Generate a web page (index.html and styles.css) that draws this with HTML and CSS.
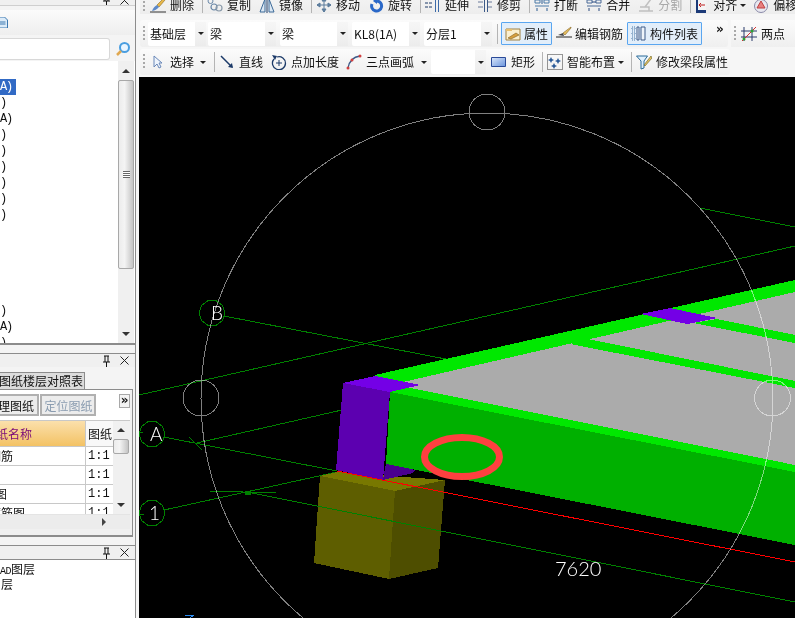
FILE: index.html
```html
<!DOCTYPE html>
<html lang="zh">
<head>
<meta charset="utf-8">
<title>梁</title>
<link rel="stylesheet" href="styles.css">
</head>
<body>
<div class="app">
<aside class="side">
  <div class="phead phead-top">
    <svg class="pin" viewBox="0 0 9 12"><path d="M2 1h5M3 1v6M6 1v6M1 7h7M4.500 7v5" fill="none" stroke="#111"/></svg>
    <svg class="close" viewBox="0 0 9 9"><path d="M.5.5l8 8M8.500.5l-8 8" stroke="#222" fill="none"/></svg>
  </div>
  <div class="ptools">
    <svg class="doc" viewBox="0 0 8 11"><path d="M0 0h5l3 3v8H0z" fill="#dcebf8" stroke="#3c78b0"/><path d="M0 5h6M0 7h6" stroke="#3c78b0"/></svg>
  </div>
  <div class="search">
    <div class="searchbox"></div>
    <svg class="lens" viewBox="0 0 16 16"><circle cx="9.500" cy="6.500" r="4.500" fill="#eaf5ff" stroke="#4a9ee0" stroke-width="2"/><path d="M6 10l-4 4" stroke="#e0a850" stroke-width="2.500"/></svg>
  </div>
  <div class="listwrap">
    <div class="list">
      <div class="row"></div>
      <div class="row sel">A)</div>
      <div class="row">)</div>
      <div class="row">A)</div>
      <div class="row">)</div>
      <div class="row">)</div>
      <div class="row">)</div>
      <div class="row">)</div>
      <div class="row">)</div>
      <div class="row">)</div>
      <div class="row"></div>
      <div class="row"></div>
      <div class="row"></div>
      <div class="row"></div>
      <div class="row"></div>
      <div class="row">)</div>
      <div class="row">A)</div>
      <div class="row">)</div>
    </div>
    <div class="vbar">
      <div class="arrow-up"></div>
      <div class="thumb"><span class="grip"></span></div>
      <div class="arrow-down"></div>
    </div>
  </div>

  <div class="phead phead-mid">
    <svg class="pin" viewBox="0 0 9 12"><path d="M2 1h5M3 1v6M6 1v6M1 7h7M4.500 7v5" fill="none" stroke="#111"/></svg>
    <svg class="close" viewBox="0 0 9 9"><path d="M.5.5l8 8M8.500.5l-8 8" stroke="#222" fill="none"/></svg>
  </div>
  <div class="tabstrip"><div class="tab">图纸楼层对照表</div></div>
  <div class="dwg">
    <div class="subtabs">
      <div class="subtab subtab-a"><span class="cut">理图纸</span></div>
      <div class="subtab subtab-b">定位图纸</div>
      <div class="more">»</div>
    </div>
    <div class="tablewrap">
      <div class="table">
        <div class="th th-name"><span class="cut-e">纸名称</span></div><div class="th th-ratio">图纸</div>
        <div class="td"><span class="cut-a">钢筋</span></div><div class="td ratio">1:1</div>
        <div class="td"></div><div class="td ratio">1:1</div>
        <div class="td"><span class="cut-b">图</span></div><div class="td ratio">1:1</div>
        <div class="td"><span class="cut-c">箍筋图</span></div><div class="td ratio">1:1</div>
      </div>
      <div class="vbar vbar-sm">
        <div class="arrow-up"></div>
        <div class="thumb thumb-sm"></div>
        <div class="arrow-down"></div>
      </div>
    </div>
    <div class="hbar"><span class="arrow-right"></span></div>
  </div>

  <div class="phead phead-low">
    <svg class="pin" viewBox="0 0 9 12"><path d="M2 1h5M3 1v6M6 1v6M1 7h7M4.500 7v5" fill="none" stroke="#111"/></svg>
    <svg class="close" viewBox="0 0 9 9"><path d="M.5.5l8 8M8.500.5l-8 8" stroke="#222" fill="none"/></svg>
  </div>
  <div class="layers">
    <div class="layer"><span class="lat">AD</span>图层</div>
    <div class="layer"><span class="cut-d">图层</span></div>
  </div>
</aside>

<main class="main">
  <div class="bar bar1">
    <span class="gripper"></span>
    <div class="tool"><svg class="ic" viewBox="0 0 16 16"><path d="M14 1L7 8l2 2 6-7z" fill="#e8b84a" stroke="#8a6a20" stroke-width=".6"/><path d="M7 8c-2 1-4 3-5 6 3-.5 5-1.500 7-4z" fill="#5c88c8"/><path d="M0 15h16" stroke="#333"/></svg>删除</div>
    <span class="sep"></span>
    <div class="tool"><svg class="ic" viewBox="0 0 16 16"><circle cx="3.500" cy="4" r="2.500" fill="none" stroke="#6a88a8"/><circle cx="7" cy="10" r="3" fill="none" stroke="#6a88a8" stroke-width="1.200"/><circle cx="12" cy="11" r="3" fill="none" stroke="#8a9aaa" stroke-width="1.200"/></svg>复制</div>
    <div class="tool"><svg class="ic" viewBox="0 0 16 16"><path d="M6 2L1 15h5zM10 2l5 13h-5z" fill="#dce8f4" stroke="#3c6a98"/><path d="M8 0v16" stroke="#1c3a68"/></svg>镜像</div>
    <span class="sep"></span>
    <div class="tool"><svg class="ic" viewBox="0 0 16 16"><path d="M8 1v14M1 8h14M8 1L6 4h4zM8 15l-2-3h4zM1 8l3-2v4zM15 8l-3-2v4z" fill="#6888a8" stroke="#5a7a9a"/></svg>移动</div>
    <div class="tool"><svg class="ic" viewBox="0 0 16 16"><path d="M9 4a5 5 0 1 1-5 3" fill="none" stroke="#2a68c8" stroke-width="3"/><path d="M9 0v7L5 4z" fill="#2a68c8"/></svg>旋转</div>
    <span class="sep"></span>
    <div class="tool"><svg class="ic" viewBox="0 0 16 16"><path d="M0 6h8M0 10h8" stroke="#1c3a68" stroke-dasharray="3 1"/><path d="M10.500 1v14M13.500 1v14" stroke="#3c6aa8"/></svg>延伸</div>
    <div class="tool"><svg class="ic" viewBox="0 0 16 16"><path d="M1 5h5M1 10h5M10 5h5M10 10h5" stroke="#6a7a9a"/><path d="M7.500 1v14M10.500 1v14" stroke="#3c5a88"/></svg>修剪</div>
    <span class="sep"></span>
    <div class="tool"><svg class="ic" viewBox="0 0 16 16"><path d="M1 3h5v3H1zM10 3h5v3h-5zM1 9h14" fill="none" stroke="#4a7aa8"/><path d="M8 1v6M3 11v3M13 11v3" stroke="#2a5a90"/></svg>打断</div>
    <div class="tool"><svg class="ic" viewBox="0 0 16 16"><path d="M1 3h5v3H1zM10 3h5v3h-5zM1 9h14" fill="none" stroke="#4a6a98"/><path d="M6 5h4M3 11v3M13 11v3" stroke="#2a4a80"/></svg>合并</div>
    <div class="tool off"><svg class="ic" viewBox="0 0 16 16"><path d="M1 14h14M2 10h9v4M13 2l-6 8" fill="none" stroke="#c0c0c0" stroke-width="1.500"/></svg>分割</div>
    <span class="sep"></span>
    <div class="tool tool-align"><svg class="ic ic-narrow" viewBox="0 0 12 16"><path d="M1 0h10v16H1z" fill="#1c3a78"/><path d="M3 3h8v10H3z" fill="#f4f4f4"/><path d="M4 8h6M4 8l2-2M4 8l2 2" stroke="#c02020"/></svg>对齐<span class="caret"></span></div>
    <div class="tool"><svg class="ic" viewBox="0 0 16 16"><circle cx="8" cy="9" r="6.500" fill="#e8e8f0" stroke="#8a8aa8"/><path d="M8 4l4 7H4z" fill="#e88080" stroke="#c04040"/></svg>偏移</div>
  </div>

  <div class="barset">
    <div class="bar bar2">
      <span class="gripper"></span>
      <div class="combo combo-a">基础层<span class="drop"></span></div>
      <div class="combo">梁<span class="drop"></span></div>
      <div class="combo">梁<span class="drop"></span></div>
      <div class="combo">KL8(1A)<span class="drop"></span></div>
      <div class="combo">分层1<span class="drop"></span></div>
      <span class="sep sep-b"></span>
      <div class="tool btn btn-a"><svg class="ic" viewBox="0 0 16 16"><path d="M1 3h14v11H1z" fill="#fbf0d0" stroke="#a08040"/><path d="M1 3h6v2H1z" fill="#e8c070"/><path d="M3 12l8-5 3 2-8 4z" fill="#d8a040" stroke="#806020" stroke-width=".6"/></svg>属性</div>
      <div class="tool tool-edit"><svg class="ic" viewBox="0 0 16 16"><path d="M15 1l-8 6 2 2 6-7z" fill="#e8c060" stroke="#806020" stroke-width=".6"/><path d="M0 11h16" stroke="#222"/><path d="M2 9l5-2 1 3z" fill="#444"/></svg>编辑钢筋</div>
      <div class="tool btn btn-b"><svg class="ic" viewBox="0 0 16 16"><path d="M1 1h3v3H1zM1 6h3v3H1zM1 11h3v3H1z" fill="#dce8f4" stroke="#4a7aa8" stroke-dasharray="1 1"/><path d="M6 1h2v13H6zM10 1h4v13h-4z" fill="#eef4fa" stroke="#3c5a88"/></svg>构件列表</div>
      <div class="more more-bar">»</div>
    </div>
    <div class="bar bar2b">
      <span class="gripper"></span>
      <div class="tool"><svg class="ic" viewBox="0 0 16 16"><path d="M3 1v14M11 1v14M0 5h16M0 11h16" stroke="#2a3a6a"/><path d="M1 15L15 1" stroke="#d03030"/><circle cx="11" cy="5" r="1.500" fill="#30a030"/><circle cx="3" cy="13" r="1.500" fill="#30a030"/></svg>两点</div>
    </div>
  </div>

  <div class="bar bar3">
    <span class="gripper"></span>
    <div class="tool tool-sel"><svg class="ic ic-ptr" viewBox="0 0 10 14"><path d="M1 1v11l3-3 2 4 2-1-2-4h3z" fill="#eef4fc" stroke="#6a88b8"/></svg>选择<span class="caret"></span></div>
    <span class="sep"></span>
    <div class="tool"><svg class="ic" viewBox="0 0 16 16"><path d="M2 2l11 11" stroke="#1c3a68" stroke-width="1.500"/><path d="M14 14l-5-1 4-4z" fill="#1c3a68"/></svg>直线</div>
    <div class="tool tool-tight"><svg class="ic" viewBox="0 0 16 16"><path d="M3 5a6.500 6.500 0 1 0 3-2" fill="none" stroke="#1c3a68" stroke-width="1.300"/><path d="M8 6v6M5 9h6" stroke="#1c3a68"/><path d="M1 1l5 1-2 4z" fill="#1c3a68"/></svg>点加长度</div>
    <div class="tool"><svg class="ic" viewBox="0 0 16 16"><path d="M2 14C3 8 7 3 14 2" fill="none" stroke="#3c5a88" stroke-width="1.300"/><circle cx="2" cy="14" r="1.500" fill="#d04040"/><circle cx="6" cy="6" r="1.500" fill="#d04040"/><circle cx="14" cy="2" r="1.500" fill="#d04040"/></svg>三点画弧<span class="caret caret-far"></span></div>
    <div class="combo combo-c"><span class="drop"></span></div>
    <div class="tool tool-tight"><svg class="ic" viewBox="0 0 16 16"><defs><linearGradient id="rg" x1="0" y1="0" x2="1" y2="1"><stop offset="0" stop-color="#dce8fa"/><stop offset="1" stop-color="#6a94dc"/></linearGradient></defs><path d="M.5 3.500h14v9H.5z" fill="url(#rg)" stroke="#2a4a98"/></svg>矩形</div>
    <span class="sep"></span>
    <div class="tool tool-smart"><svg class="ic" viewBox="0 0 16 16"><path d="M.5.500h15v15H.5z" fill="none" stroke="#333" stroke-dasharray="1 1"/><path d="M4 3l1 2 2 1-2 1-1 2-1-2-2-1 2-1zM11 4l1 2 2 1-2 1-1 2-1-2-2-1 2-1zM7 9l1 2 2 1-2 1-1 2-1-2-2-1 2-1z" fill="#2a5a98"/></svg>智能布置<span class="caret"></span></div>
    <span class="sep"></span>
    <div class="tool"><svg class="ic" viewBox="0 0 16 16"><path d="M.5 2h11L8 7v7l-3 1V7z" fill="#e0f0fc" stroke="#2a6a98"/><path d="M15 2L8 11l1 1 7-8z" fill="#e8c060" stroke="#606020" stroke-width=".6"/></svg>修改梁段属性</div>
  </div>

  <div class="canvas">
    <svg class="scene" viewBox="139 77 656 541" width="656" height="541">
      <defs>
        <polygon id="axis" points="13,0 10.500,7.600 4,12.400 -4,12.400 -10.500,7.600 -13,0 -10.500,-7.600 -4,-12.400 4,-12.400 10.500,-7.600"/>
      </defs>
      <g class="gl">
        <path d="M139 395L795 246"/>
        <path d="M700 208L795 227"/>
        <path d="M224 316L456 361"/>
        <path d="M197 443L342 410"/>
        <path d="M164 437L337 471"/>
        <path d="M164 510L337 472"/>
        <path d="M139 515L144 514"/>
        <path d="M139 432L143 433"/>
        <path d="M189 437L202 450"/>
        <path d="M209 491L276 493"/>
        <use href="#axis" x="212" y="313"/>
        <use href="#axis" x="152" y="434"/>
        <use href="#axis" x="152" y="513"/>
      </g>
      <g class="solid">
        <path class="c-base-top" d="M320 476L337 472L445 480L395 491Z"/>
        <path class="c-base-front" d="M320 476L395 491L389 579L314 563Z"/>
        <path class="c-base-side" d="M395 491L445 480L438 568L389 579Z"/>
        <path class="c-col-side" d="M386 463L415 470L413 473L383 480Z"/>
        <path class="c-beam" d="M390 392L795 472V545L386 464Z"/>
        <path class="c-bright" d="M375 375L795 280V472L390 392Z"/>
        <path class="c-slab" d="M403 382L795 292V465L410 388Z"/>
        <path class="c-bright" d="M570 344L588 339L795 381V388Z"/>
        <path class="c-bright" d="M693 323L717 319L795 335V343Z"/>
        <path class="c-col-top" d="M641 314L670 308L717 318L687 324Z"/>
        <path class="c-col-top" d="M343 383L375 376L420 385L390 392Z"/>
        <path class="c-col-front" d="M343 383L390 392L383 480L336 470Z"/>
      </g>
      <g class="gl">
        <path d="M247 492L795 602"/>
        <path class="blob" d="M245 491h5v3h-5z"/>
      </g>
      <path class="red" d="M337 471L795 562"/>
      <ellipse class="mark" cx="462" cy="457" rx="37.500" ry="19.500"/>
      <g class="guide">
        <circle cx="487" cy="399" r="286"/>
        <circle cx="487" cy="112" r="18"/>
        <circle cx="201" cy="398" r="18"/>
        <circle cx="772.500" cy="398" r="18"/>
      </g>
      <path class="blue" d="M185 615H194L190 618"/>
      <text class="lbl" x="211" y="320">B</text>
      <text class="lbl" x="150" y="441">A</text>
      <text class="lbl" x="149" y="520">1</text>
      <text class="dim" x="555" y="576">7620</text>
    </svg>
  </div>
</main>
</div>
</body>
</html>
```
FILE: styles.css
```css
* { box-sizing: border-box; }
html, body { margin: 0; padding: 0; width: 795px; height: 618px; overflow: hidden; background: #f6f6f6; }
body { font-family: "Noto Sans CJK SC", "Liberation Sans", sans-serif; font-size: 12px; color: #111; }
svg { display: block; flex: none; }

.app { display: flex; width: 795px; height: 618px; }
.side { width: 136px; height: 618px; flex: none; display: flex; flex-direction: column; overflow: hidden; margin-right: 3px; background: #f4f4f4; border-right: 1px solid #8c8c8c; }
.main { flex: 1; min-width: 0; display: flex; flex-direction: column; height: 618px; overflow: hidden; }

/* side panels */
.phead { display: flex; align-items: flex-end; justify-content: flex-end; gap: 9px; padding-right: 6px; flex: none; overflow: hidden; background: #f0f0f0; }
.phead-top { height: 6px; border-bottom: 1px solid #cfcfcf; align-items: flex-end; }
.phead-top .pin { margin-bottom: -1px; }
.phead-top .close { margin-bottom: 0; }
.phead-mid { height: 14px; margin-top: 8px; border-top: 1px solid #8c8c8c; align-items: center; }
.phead-low { height: 15px; margin-top: 8px; border-top: 1px solid #8c8c8c; border-bottom: 1px solid #8c8c8c; align-items: center; }
.pin { width: 9px; height: 12px; }
.close { width: 9px; height: 9px; }
.ptools { height: 25px; margin-top: 4px; padding-top: 7px; background: linear-gradient(#fbfbfb, #eeeeee); flex: none; margin-left: -1px; }
.doc { width: 9px; height: 11px; }
.search { height: 25px; display: flex; align-items: center; flex: none; margin-top: 1px; }
.searchbox { width: 110px; height: 22px; background: #fff; border: 1px solid #d8d8d8; border-left: 0; border-radius: 0 3px 3px 0; }
.lens { width: 16px; height: 16px; margin-left: 5px; }
.listwrap { height: 284px; flex: none; display: flex; background: #fff; border-bottom: 2px solid #8c8c8c; overflow: hidden; }
.list { width: 118px; padding-top: 2px; font-family: "Liberation Mono", monospace; letter-spacing: -1.2px; }
.row { height: 16px; line-height: 17px; color: #111; }
.row.sel { width: 16px; background: #316ac5; color: #fff; }
.vbar { width: 16px; display: flex; flex-direction: column; align-items: stretch; background: #f0f0f0; position: relative; }
.arrow-up, .arrow-down { height: 19px; flex: none; display: flex; align-items: center; justify-content: center; }
.arrow-up::before { content: ""; border: 4px solid transparent; border-bottom: 4px solid #333; border-top: 0; }
.arrow-down::before { content: ""; border: 4px solid transparent; border-top: 4px solid #333; border-bottom: 0; }
.thumb { height: 189px; flex: none; background: linear-gradient(90deg, #ececec, #f4f4f4 40%, #c4c4c4); border: 1px solid #a8a8a8; border-radius: 2px; display: flex; align-items: center; justify-content: center; margin-bottom: auto; }
.grip { width: 7px; height: 7px; border-top: 1px solid #666; border-bottom: 1px solid #666; background: linear-gradient(#fff 0 1px, #666 1px 2px, #fff 2px 3px, #666 3px 4px, #fff 4px); }

.tabstrip { height: 22px; flex: none; display: flex; align-items: flex-end; background: #f4f4f4; }
.tab { width: 85px; height: 17px; line-height: 16px; background: #dcdcdc; border: 1px solid #8c8c8c; border-left: 0; border-bottom: 0; font-size: 12px; padding-left: 0; white-space: nowrap; overflow: hidden; text-indent: -1px; }
.dwg { height: 148px; flex: none; display: flex; flex-direction: column; border-top: 1px solid #8c8c8c; border-bottom: 2px solid #8c8c8c; border-right: 1px solid #8c8c8c; margin-right: 2px; background: #f0f0f0; padding-right: 2px; }
.subtabs { height: 30px; flex: none; display: flex; background: #fff; padding-top: 4px; }
.subtab { height: 22px; line-height: 20px; background: #ececec; border: 2px solid #b0b0b0; border-left: 0; white-space: nowrap; overflow: hidden; }
.subtab-a { width: 39px; margin-right: 1px; }
.subtab-b { width: 57px; color: #8a9cb0; border-left: 2px solid #b0b0b0; padding-left: 3px; }
.cut { margin-left: -2px; }
.more { font-family: "DejaVu Sans", sans-serif; font-size: 12px; font-weight: 700; line-height: 11px; }
.subtabs .more { width: 11px; height: 14px; margin-left: 23px; background: #f4f4f4; border: 1px solid #a8a8a8; text-align: center; }
.tablewrap { height: 94px; flex: none; display: flex; background: #f0f0f0; border-top: 1px solid #c8c8c8; }
.table { width: 113px; display: grid; grid-template-columns: 85px 28px; grid-auto-rows: 19px; grid-template-rows: 26px; background: #fff; overflow: hidden; }
.th { line-height: 25px; white-space: nowrap; overflow: hidden; border-bottom: 1px solid #c8c8c8; }
.th-name { background: linear-gradient(#fbe0ac, #f3c264); color: #7a0a78; }
.th-ratio { background: #f8f8f8; border-left: 1px solid #c8c8c8; padding-left: 2px; }
.td { border-bottom: 1px solid #c8c8c8; line-height: 18px; white-space: nowrap; overflow: hidden; }
.ratio { border-left: 1px solid #c8c8c8; padding-left: 2px; font-family: "Liberation Mono", monospace; }
.cut-a { margin-left: -11px; display: inline-block; }
.cut-b { margin-left: -5px; display: inline-block; }
.cut-c { margin-left: -11px; display: inline-block; }
.cut-e { margin-left: -4px; display: inline-block; }
.vbar-sm { width: 16px; }
.vbar-sm .arrow-up, .vbar-sm .arrow-down { height: 18px; }
.thumb-sm { height: 15px; }
.hbar { height: 15px; flex: none; background: #ececec; display: flex; align-items: center; padding-left: 102px; border-top: 1px solid #e4e4e4; }
.arrow-right { border: 4px solid transparent; border-left: 4px solid #444; border-right: 0; }
.layers { flex: 1; background: #fff; padding-top: 1px; overflow: hidden; }
.layer { height: 15px; line-height: 15px; white-space: nowrap; }
.lat { font-family: "Liberation Mono", monospace; font-size: 10px; letter-spacing: -.5px; }
.cut-d { margin-left: -11px; display: inline-block; }

/* toolbars */
.bar { display: flex; align-items: center; flex: none; white-space: nowrap; background: linear-gradient(#fbfbfb, #efefef); }
.bar1 { height: 14px; align-items: flex-end; overflow: hidden; margin-left: 1px; padding-bottom: 1px; background: linear-gradient(#f2f2f2, #ededed); }
.barset { display: flex; margin-top: 6px; height: 27px; flex: none; margin-left: 1px; }
.bar2 { width: 588px; height: 27px; border-radius: 3px; }
.bar2 > .gripper { margin-right: 3px; }
.bar2b { flex: 1; height: 27px; margin-left: 3px; }
.bar3 { height: 26px; margin-top: 2px; margin-left: 1px; margin-bottom: 2px; width: 590px; border-radius: 3px; }
.gripper { width: 2px; height: 16px; margin: 0 5px 0 3px; flex: none; background: repeating-linear-gradient(#a8a8a8 0 2px, transparent 2px 4px); }
.tool { display: flex; align-items: center; gap: 4px; margin-right: 8px; line-height: 14px; flex: none; }
.tool.off { color: #a8a8a8; }
.tool-tight { margin-right: 7px; }
.ic { width: 16px; height: 16px; }
.ic-narrow { width: 12px; margin-right: 2px; }
.ic-ptr { width: 10px; height: 14px; margin: 0 3px; }
.sep { width: 1px; height: 20px; background: #b4b4b4; margin-right: 4px; flex: none; }
.bar1 .sep { height: 14px; }
.caret { width: 0; height: 0; border: 3px solid transparent; border-top: 3px solid #222; border-bottom: 0; margin-left: -1px; flex: none; }
.caret-far { margin-left: 3px; }
.tool-align { margin-right: 7px; }
.tool-sel { gap: 4px; margin-right: 8px; }
.tool-sel .caret { margin-left: 2px; }
.tool-edit { margin: 0 4px; gap: 3px; }
.tool-smart { gap: 4px; margin-right: 7px; }

.combo { width: 68px; height: 24px; background: #fff; margin-right: 4px; padding-left: 2px; line-height: 24px; display: flex; justify-content: space-between; flex: none; border-radius: 2px; }
.combo-a { width: 58px; margin-right: 2px; }
.combo-c { width: 55px; margin: 0 5px 0 -4px; justify-content: flex-end; }
.drop { width: 11px; height: 24px; background: linear-gradient(#f6f6f6, #ececec); display: flex; align-items: center; justify-content: center; flex: none; }
.drop::before { content: ""; border: 3px solid transparent; border-top: 3px solid #222; border-bottom: 0; }
.sep-b { margin: 0 3px 0 1px; }
.btn { height: 23px; background: #e2eefa; border: 1px solid #5aa6f0; padding: 0 2px; gap: 3px; margin: 0; border-radius: 1px; }
.btn-a { width: 51px; padding-left: 3px; }
.btn-b { width: 75px; padding-left: 3px; margin-right: 14px; gap: 3px; }
.more-bar { margin-top: -9px; }

/* canvas */
.canvas { flex: 1; background: #000; overflow: hidden; }
.scene { display: block; shape-rendering: crispEdges; }
.gl path, .gl use { fill: none; stroke: #008000; stroke-width: 1; }
.gl .blob { fill: #008000; }
.solid path { stroke: none; }
.c-base-top { fill: #787800; }
.c-base-front { fill: #5e5e00; }
.c-base-side { fill: #4e4e00; }
.c-col-side { fill: #4a0090; }
.c-col-front { fill: #5c00b0; }
.c-col-top { fill: #7400e6; }
.c-beam { fill: #00b000; }
.c-bright { fill: #00e800; }
.c-slab { fill: #ababab; }
.red { stroke: #f00; fill: none; }
.mark { fill: none; stroke: #ff4040; stroke-width: 7; shape-rendering: geometricPrecision; }
.guide { mix-blend-mode: screen; }
.guide circle { fill: none; stroke: #808080; }
.blue { fill: none; stroke: #2a8af0; }
.lbl { fill: #fff; font-family: Lato, "Liberation Sans", sans-serif; font-weight: 300; font-size: 19px; }
.dim { fill: #fff; font-family: Lato, "Liberation Sans", sans-serif; font-weight: 300; font-size: 20px; }
```
